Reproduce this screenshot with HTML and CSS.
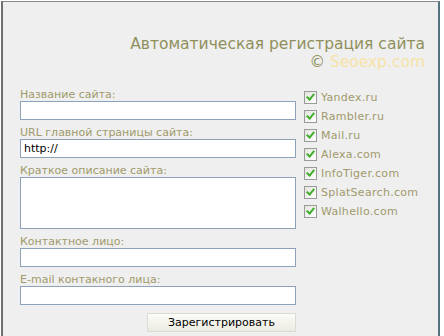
FILE: index.html
```html
<!DOCTYPE html>
<html lang="ru">
<head>
  <meta charset="UTF-8" />
  <title>Автоматическая регистрация сайта</title>
  <link rel="stylesheet" href="styles.css">
</head>
<body>
  <div class="frame">
    <div class="head">
      <div class="title">Автоматическая регистрация сайта</div>
      <div class="copy">&copy; <span class="brand">Seoexp.com</span></div>
    </div>

    <div class="main">
      <form class="reg-form">
        <label>Название сайта:</label>
        <input type="text">
        <label>URL главной страницы сайта:</label>
        <input type="text" value="http://">
        <label>Краткое описание сайта:</label>
        <textarea></textarea>
        <label>Контактное лицо:</label>
        <input type="text">
        <label>E-mail контакного лица:</label>
        <input type="text">
        <div class="actions">
          <button type="button">Зарегистрировать</button>
        </div>
      </form>

      <ul class="engines">
        <li><span class="chk"></span>Yandex.ru</li>
        <li><span class="chk"></span>Rambler.ru</li>
        <li><span class="chk"></span>Mail.ru</li>
        <li><span class="chk"></span>Alexa.com</li>
        <li><span class="chk"></span>InfoTiger.com</li>
        <li><span class="chk"></span>SplatSearch.com</li>
        <li><span class="chk"></span>Walhello.com</li>
      </ul>
    </div>
  </div>
</body>
</html>
```

FILE: styles.css
```css
:root {
  --bg: #efefef;
  --olive: #8f8f5c;
  --label: #a09a6c;
  --pale: #f7e3a6;
  --field-border: #8da2b8;
}

body {
  margin: 0;
  background: #fff;
  font-family: 'DejaVu Sans', Verdana, sans-serif;
}

.frame {
  width: 439px;
  height: 336px;
  margin-left: 1px;
  margin-top: 1px;
  box-sizing: border-box;
  background: var(--bg);
  border-left: 2px solid #6f6f6f;
  border-top: 1px solid #8a8a8a;
  border-right: 2px solid #55727f;
  padding: 0 13px 0 17px;
}

.head {
  text-align: right;
  padding-top: 33px;
  color: var(--olive);
  font-size: 15.5px;
  line-height: 18px;
}

.copy .brand {
  color: var(--pale);
}

.main {
  display: flex;
  margin-top: 17px;
}

.reg-form {
  width: 276px;
  display: flex;
  flex-direction: column;
}

.reg-form label {
  font-size: 11px;
  line-height: 13px;
  color: var(--label);
}

.reg-form input,
.reg-form textarea {
  box-sizing: border-box;
  width: 276px;
  height: 19px;
  margin: 0 0 6px;
  padding: 0 3px;
  border: 1px solid var(--field-border);
  background: #fff;
  font-family: 'DejaVu Sans', sans-serif;
  font-size: 11px;
  color: #000;
}

.reg-form textarea {
  height: 52px;
  resize: none;
}

.actions {
  display: flex;
  justify-content: flex-end;
  margin-top: 2px;
}

.actions button {
  width: 149px;
  height: 19px;
  padding: 0;
  border: 1px solid #dcdcd4;
  background: linear-gradient(#fbfbf8, #ecebe2);
  font-family: 'DejaVu Sans', sans-serif;
  font-size: 11px;
  color: #000;
}

.engines {
  list-style: none;
  margin: 0 0 0 8px;
  padding: 0;
}

.engines li {
  display: flex;
  align-items: center;
  height: 19px;
  font-size: 11px;
  color: var(--label);
  letter-spacing: 0.3px;
}

.chk {
  width: 11px;
  height: 11px;
  margin-right: 4px;
  border: 1px solid #9a9a9a;
  background: linear-gradient(135deg, #e4e4de, #fff);
  position: relative;
}

.chk::after {
  content: "";
  position: absolute;
  left: 3px;
  top: 0;
  width: 3px;
  height: 6px;
  border: solid #3fae2a;
  border-width: 0 2px 2px 0;
  transform: rotate(40deg);
}
```
